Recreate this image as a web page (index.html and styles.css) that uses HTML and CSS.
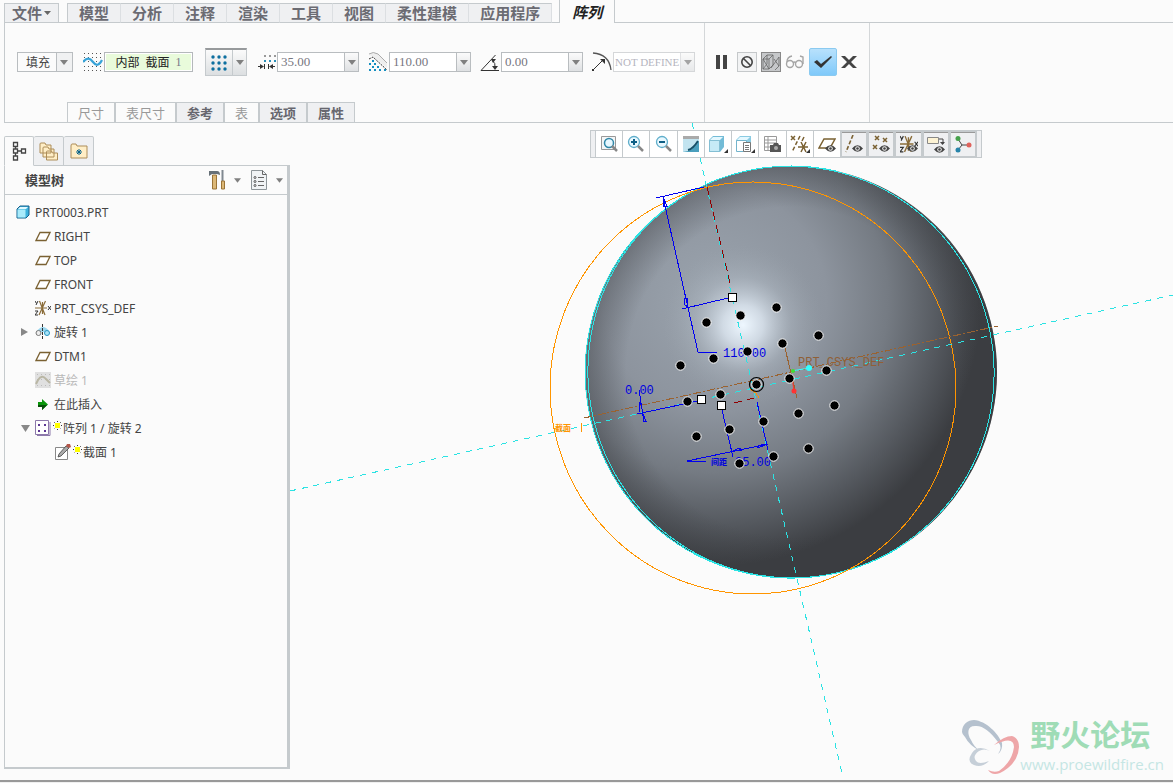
FILE: index.html
```html
<!DOCTYPE html>
<html lang="zh-CN">
  <head>
    <meta charset="utf-8" />
    <title>阵列</title>
    <link rel="stylesheet" href="styles.css">
  </head>
  <body>
    <svg width="0" height="0" class="defs" aria-hidden="true">
      <symbol id="plane" viewBox="0 0 16 16"><path d="M5 4.500h10l-4 8H1z" fill="#fff" stroke="#7a6132" stroke-width="1.300" /></symbol>
      <symbol id="caret" viewBox="0 0 8 5"><path d="M0 0h8l-4 5z" fill="#808080" /></symbol>
      <symbol id="eye" viewBox="0 0 11 7"><path d="M0 3.500Q5.500-3 11 3.500Q5.500 10 0 3.500" fill="#444" /><circle cx="5.500" cy="3.500" r="2.300" fill="#eee" /><circle cx="5.500" cy="3.500" r="1.300" fill="#444" /></symbol>
      <symbol id="star" viewBox="0 0 9 9"><path d="M4.500 0v9M0 4.500h9M1 1l7 7M8 1l-7 7" stroke="#333" stroke-dasharray="1 1" /><path d="M2 2h5v5h-5z" fill="#ff0" /></symbol>
      <symbol id="csys" viewBox="0 0 16 16"><path d="M0 8h12M4.500 1l5.500 14M10.500 1L4 15M7.500 2v12" stroke="#8a6c38" stroke-width="1.200" fill="none" /><path d="M0 1l1.500 2.500M3 1L1 5M0 11h3l-3 4h3M13 6l3 4M16 6l-3 4" stroke="#333" fill="none" /></symbol>
    </svg>

    <header class="ribbon">
      <nav class="tabs">
        <button class="tab file">文件<svg width="7" height="4" viewBox="0 0 7 4"><path d="M0 0h7L3.500 4z" fill="#666" /></svg></button>
        <div class="tab-group">
          <button class="tab">模型</button>
          <button class="tab">分析</button>
          <button class="tab">注释</button>
          <button class="tab">渲染</button>
          <button class="tab">工具</button>
          <button class="tab">视图</button>
          <button class="tab">柔性建模</button>
          <button class="tab">应用程序</button>
        </div>
        <button class="tab current">阵列</button>
      </nav>

      <div class="dashboard">
        <div class="options">
          <div class="fields">
            <select class="type" aria-label="阵列类型"><option>填充</option></select>

            <div class="field">
              <svg width="20" height="20"><path d="M1 1.500h19M1 5.500h19M1 9.500h19M1 14.500h19M1 18.500h19" stroke="#555" stroke-dasharray="1 3" /><path d="M0 10C4 5 7 6 10 10S16 14 19 8" fill="none" stroke="#38a3d8" stroke-width="2.200" /></svg>
              <button class="collector"><span>内部</span><span>截面</span><span class="count">1</span></button>
            </div>

            <div class="grid-type">
              <button class="dots" aria-label="栅格">
                <svg width="18" height="18" fill="#0d6f9f"><circle cx="3" cy="3" r="1.700" /><circle cx="9" cy="3" r="1.700" /><circle cx="15" cy="3" r="1.700" /><circle cx="3" cy="9" r="1.700" /><circle cx="9" cy="9" r="1.700" /><circle cx="15" cy="9" r="1.700" /><circle cx="3" cy="15" r="1.700" /><circle cx="9" cy="15" r="1.700" /><circle cx="15" cy="15" r="1.700" /></svg>
              </button>
              <button class="drop" aria-label="栅格列表"><svg width="8" height="5"><use href="#caret" /></svg></button>
            </div>

            <div class="field">
              <svg width="18" height="20"><path d="M6 4h12" stroke="#999" stroke-width="2" stroke-dasharray="2 3" /><path d="M6 9h12" stroke="#2b8fb8" stroke-width="2" stroke-dasharray="2 3" /><path d="M0 14.500h5M12 14.500h5M6.500 12v5M10.500 12v5" stroke="#333" /><path d="M2 12l4 2.500-4 2.500zM15 12l-4 2.500 4 2.500z" fill="#333" /></svg>
              <div class="combo"><input value="35.00" aria-label="间距" /><button aria-label="间距列表"><svg width="8" height="5"><use href="#caret" /></svg></button></div>
            </div>

            <div class="field">
              <svg width="20" height="20"><path d="M1 3Q5-1 10 2L19 11v5L6 5z" fill="#eee" /><path d="M1 2Q5-1 10 2L19 11" fill="none" stroke="#aaa" /><path d="M1 7l4-2 14 13" fill="none" stroke="#333" stroke-dasharray="2 1" /><path d="M4 9h4M1 12h10M4 15h10M1 18h18" stroke="#168fc0" stroke-width="2" stroke-dasharray="2 3" /></svg>
              <div class="combo"><input value="110.00" aria-label="边界" /><button aria-label="边界列表"><svg width="8" height="5"><use href="#caret" /></svg></button></div>
            </div>

            <div class="field">
              <svg width="20" height="20"><path d="M15.500 3L1 18.500h18M12 8q4 3 3 8" fill="none" stroke="#333" /><path d="M11 7h5l-3 4zM12 14h6l-3 4z" fill="#333" /></svg>
              <div class="combo"><input value="0.00" aria-label="角度" /><button aria-label="角度列表"><svg width="8" height="5"><use href="#caret" /></svg></button></div>
            </div>

            <div class="field">
              <svg width="20" height="20"><path d="M1 1Q17 2 19 18" fill="none" stroke="#555" stroke-width="1.300" /><path d="M1 18L11 8" stroke="#333" /><path d="M8 7h5v5zM0 17h2v2H0z" fill="#333" /></svg>
              <div class="combo off"><input value="NOT DEFINE" aria-label="半径" disabled /><button aria-label="半径列表" disabled><svg width="8" height="5"><use href="#caret" /></svg></button></div>
            </div>
          </div>

          <div class="slides">
            <button disabled>尺寸</button>
            <button disabled>表尺寸</button>
            <button>参考</button>
            <button disabled>表</button>
            <button>选项</button>
            <button>属性</button>
          </div>
        </div>

        <div class="controls">
          <button class="pause" aria-label="暂停"><svg width="14" height="14"><path d="M1 0h4v14H1zM8 0h4v14H8z" fill="#444" /></svg></button>
          <button class="boxed" aria-label="无预览"><svg width="14" height="14"><circle cx="7" cy="7" r="5.200" fill="none" stroke="#444" stroke-width="1.600" /><path d="M3.500 3.500l7 7" stroke="#444" stroke-width="1.600" /></svg></button>
          <button class="boxed pressed" aria-label="连接"><svg width="18" height="18" fill="none" stroke="#666" stroke-width=".8"><path d="M1 6l4-4h6l-4 4zM1 6v10h6V6M7 16l4-4V2M5 2v9l-4 5M9 15l8-11v9l-4 4M12 6l5 7M1 6l6 10" /></svg></button>
          <button aria-label="预览"><svg width="20" height="14" fill="none" stroke="#a5a5a5" stroke-width="1.400"><circle cx="5" cy="9" r="3.500" /><circle cx="14" cy="9" r="3.500" /><path d="M8 8q1.500-2 3 0M2 7q0-5 5-6M18 9V2l-3-1" /></svg></button>
          <button class="ok" aria-label="确定"><svg width="20" height="14"><path d="M1 7l3-2 4 4L18 1l1 1L8 13z" fill="#333" /></svg></button>
          <button aria-label="取消"><svg width="16" height="14"><path d="M0 1h4l4 4 4-4h4l-6 6 6 6h-4L8 9l-4 4H0l6-6z" fill="#444" /></svg></button>
        </div>
      </div>
    </header>

    <main class="workspace">
      <aside class="navigator">
        <div class="nav-tabs">
          <button class="current" aria-label="模型树"><svg width="15" height="20" fill="none" stroke="#444" stroke-width="1.300"><path d="M1.500 1.500h4v4h-4zM1.500 8h4v4h-4zM1.500 15h4v4h-4zM9.500 8h4v4h-4zM3.500 5.500V8M3.500 12v3M5.500 10h4" /></svg></button>
          <button aria-label="文件夹"><svg width="20" height="20" fill="#ffeec6" stroke="#ad8d58"><path d="M1 3q0-1 1-1h4l1 2h5v8H1zM4 7q0-1 1-1h4l1 2h5v8H4zM7.500 11q0-1 1-1h4l1 2h5v7h-11z" /></svg></button>
          <button aria-label="收藏夹"><svg width="18" height="16"><path d="M1 3q0-2 1-2h4l1 2h10v12H1z" fill="#ffeec6" stroke="#ad8d58" /><path d="M9 6v6M6 9h6M7 7l4 4M11 7l-4 4" stroke="#07628a" /></svg></button>
        </div>

        <section class="panel">
          <div class="panel-head">
            <h2>模型树</h2>
            <button aria-label="设置"><svg width="18" height="22"><path d="M1 2h8q3 0 3 4L9 5H4L1 7z" fill="#667078" /><path d="M4.500 6h4v14h-4z" fill="#dcb878" stroke="#9a7438" /><path d="M14.500 1v11" stroke="#808890" stroke-width="2" /><path d="M13.500 12h3v8h-3z" fill="#dcb878" stroke="#9a7438" /></svg><svg width="7" height="5"><use href="#caret" /></svg></button>
            <button aria-label="显示"><svg width="18" height="20"><path d="M1.500.5h11l4 4v15h-15z" fill="#f0f3f5" stroke="#8d9599" /><path d="M12.500.5v4h4M8 7.500h6M8 11.500h6M8 15.500h6" fill="none" stroke="#666" /><g fill="none" stroke="#555"><circle cx="5" cy="7.500" r="1" /><circle cx="5" cy="11.500" r="1" /><circle cx="5" cy="15.500" r="1" /></g></svg><svg width="7" height="5"><use href="#caret" /></svg></button>
          </div>

          <ul class="tree">
            <li class="root"><svg width="14" height="14"><path d="M1 4l3-3h9v9l-3 3H1z" fill="#3cb1dc" stroke="#17608c" /><path d="M1.500 4.500h8v8h-8z" fill="#a9ebfb" /><path d="M2 4l2-2h8l-2 2z" fill="#e0f9ff" /></svg><span>PRT0003.PRT</span></li>
            <li><svg width="16" height="16"><use href="#plane" /></svg><span>RIGHT</span></li>
            <li><svg width="16" height="16"><use href="#plane" /></svg><span>TOP</span></li>
            <li><svg width="16" height="16"><use href="#plane" /></svg><span>FRONT</span></li>
            <li><svg width="16" height="16"><use href="#csys" /></svg><span>PRT_CSYS_DEF</span></li>
            <li class="branch"><svg width="8" height="10"><path d="M0 1v8l7-4z" fill="#888" /></svg><svg width="16" height="16"><path d="M2 7q6-8 12 0l-5 1H6z" fill="#9bd6ee" /><circle cx="3.500" cy="9" r="2.500" fill="#eee" stroke="#777" /><circle cx="12" cy="9" r="2.500" fill="#a8e4fa" stroke="#2794bf" /><path d="M7.500 0v16" stroke="#333" stroke-dasharray="3 1" /></svg><span>旋转 1</span></li>
            <li><svg width="16" height="16"><use href="#plane" /></svg><span>DTM1</span></li>
            <li class="hidden"><svg width="16" height="16"><path d="M0 0h16v16H0z" fill="#e0e0e0" /><path d="M2 2.500h13M2 7.500h13M2 13.500h13" stroke="#bbb" stroke-dasharray="1 3" /><path d="M1 12l2-4q4-6 8-1l4 4" fill="none" stroke="#b9b6a4" stroke-width="2" /></svg><span>草绘 1</span></li>
            <li><svg width="16" height="16"><path d="M3 6h4V3l6 5.500L7 14v-3H3z" fill="#0a960a" /><path d="M3 9h9l-5 5v-3H3z" fill="#064f08" /></svg><span>在此插入</span></li>
            <li class="branch"><svg width="10" height="8"><path d="M0 1h9L4.500 8z" fill="#888" /></svg><svg width="16" height="16"><path d="M.5.500h13v14H.5z" fill="#fff" stroke="#8c78aa" /><path d="M2 15.500h13V2" fill="none" stroke="#8c78aa" /><path d="M3 4h2v2H3zM9 4h2v2H9zM3 10h2v2H3zM9 10h2v2H9z" fill="#5c3693" /></svg><svg class="new" width="9" height="9"><use href="#star" /></svg><span>阵列 1 / 旋转 2</span></li>
            <li class="leaf"><svg width="16" height="16"><path d="M.5 3.500h12v12H.5z" fill="#fff" stroke="#888" /><path d="M3 13l1-3 7-8 3 2-8 8z" fill="#aaa" stroke="#444" stroke-width=".8" /><path d="M12 0h3l1 3-2 1-3-2z" fill="#b4564a" /></svg><svg class="new" width="9" height="9"><use href="#star" /></svg><span>截面 1</span></li>
          </ul>
        </section>
      </aside>

      <section class="viewport">
        <svg class="scene" viewBox="290 123 883 657">
          <defs>
            <radialGradient id="shade" gradientUnits="userSpaceOnUse" cx="715" cy="300" r="266">
              <stop offset="0" stop-color="#9ba4ae" />
              <stop offset=".42" stop-color="#8d949e" />
              <stop offset=".65" stop-color="#757b83" />
              <stop offset=".85" stop-color="#54585e" />
              <stop offset="1" stop-color="#3b3d41" />
            </radialGradient>
            <radialGradient id="rim" gradientUnits="userSpaceOnUse" cx="791" cy="372" r="206">
              <stop offset=".8" stop-color="#3b3d41" stop-opacity="0" />
              <stop offset="1" stop-color="#3b3d41" stop-opacity=".4" />
            </radialGradient>
            <radialGradient id="shine" gradientUnits="userSpaceOnUse" cx="743" cy="325" r="80">
              <stop offset="0" stop-color="#eef7ff" />
              <stop offset=".25" stop-color="#e4eef8" stop-opacity=".75" />
              <stop offset=".6" stop-color="#c4ced8" stop-opacity=".25" />
              <stop offset="1" stop-color="#a0a8b0" stop-opacity="0" />
            </radialGradient>
          </defs>

          <circle cx="791" cy="372" r="206" fill="url(#shade)" />
          <circle cx="791" cy="372" r="206" fill="url(#rim)" />
          <circle cx="743" cy="325" r="80" fill="url(#shine)" />

          <g class="lines">
            <path class="cyan" d="M836 171A206 206 0 1 0 900 547" />
            <ellipse class="cyan" cx="791" cy="372" rx="203" ry="206" transform="rotate(-12 791 372)" />
            <ellipse class="orange" cx="753" cy="388" rx="203" ry="206" />
            <path class="cyan axis" d="M290 491L1173 295M692 123L843 778" />
            <path class="brown" stroke-dasharray="8 2 2 2" d="M584 418L998 326" />
            <path class="brown" d="M785 348l12 50" />
            <path class="maroon" stroke-dasharray="8 5" d="M707 187l24 100M734 403l24-6" />
            <path class="orange" d="M581 423v9M750 389l6 4 3 5" />

            <path class="blue" d="M656 198l48-11M663 197l35 155h19M682 309l46-11" />
            <path class="blue" d="M663 197v9h4zM684 298h3l1 9-3-2z" />
            <path class="blue" d="M639 390l5 32M637 414l61-13M639 412l1-10 3 10M643 414l3 7h-3z" />
            <path class="blue" d="M722 410l11 47M757 402l11 48M706 461h-19l81-17" />
            <path class="blue" d="M733 451l6-3 3 2zM767 444l-6 1-4 2 1 1z" />
          </g>

          <text class="dim" x="723" y="357">110.00</text>
          <text class="dim" x="625" y="394">0.00</text>
          <text class="dim" x="735" y="466">35.00</text>
          <text class="tag dim-tag" x="711" y="465">间距</text>
          <text class="tag section-tag" x="555" y="431">截面</text>
          <text class="csys-name" x="798" y="366">PRT_CSYS_DEF</text>

          <path d="M792 371l17-3" stroke="#3ff" />
          <path d="M792 377l2 14" stroke="#f33" />
          <circle cx="793" cy="371" r="2" fill="#4d3" />
          <circle cx="809" cy="368" r="3" fill="#3ff" />
          <circle cx="794" cy="391" r="2.500" fill="#f33" />

          <!-- pattern members -->
          <g class="members" transform="translate(.5 .5)">
            <circle cx="740" cy="315" r="4.700" /><circle cx="776" cy="307" r="4.700" />
            <circle cx="706" cy="322" r="4.700" /><circle cx="818" cy="335" r="4.700" />
            <circle cx="782" cy="343" r="4.700" /><circle cx="747" cy="351" r="4.700" />
            <circle cx="713" cy="358" r="4.700" /><circle cx="680" cy="365" r="4.700" />
            <circle cx="826" cy="370" r="4.700" /><circle cx="789" cy="378" r="4.700" />
            <circle cx="756" cy="384" r="4.700" /><circle cx="720" cy="394" r="4.700" />
            <circle cx="687" cy="401" r="4.700" /><circle cx="834" cy="405" r="4.700" />
            <circle cx="798" cy="413" r="4.700" /><circle cx="763" cy="421" r="4.700" />
            <circle cx="729" cy="429" r="4.700" /><circle cx="696" cy="436" r="4.700" />
            <circle cx="808" cy="448" r="4.700" /><circle cx="773" cy="456" r="4.700" />
            <circle cx="739" cy="463" r="4.700" />
          </g>
          <circle cx="756.5" cy="384.5" r="7" fill="none" stroke="#000" stroke-width="1.200" />

          <!-- drag handles -->
          <g class="handles">
            <rect x="728.5" y="293.5" width="8" height="8" />
            <rect x="697.5" y="395.5" width="8" height="8" />
            <rect x="717.5" y="401.5" width="8" height="8" />
          </g>
        </svg>

        <div class="view-bar">
          <button aria-label="重新调整"><svg width="18" height="18"><path d="M1.500 1.500h14v13h-14z" fill="#f4f6f7" stroke="#999" /><circle cx="9" cy="8" r="4.500" fill="#e8f8ff" stroke="#3188a8" stroke-width="1.500" /><path d="M12 11l5 5" stroke="#888" stroke-width="2.500" /></svg></button>
          <button aria-label="放大"><svg width="18" height="18"><circle cx="7" cy="7" r="5.500" fill="#e8f8ff" stroke="#5faecb" stroke-width="1.300" /><path d="M4 7h6M7 4v6" stroke="#0d5f86" stroke-width="2" /><path d="M11 11l5 5" stroke="#888" stroke-width="2.500" /></svg></button>
          <button aria-label="缩小"><svg width="18" height="18"><circle cx="7" cy="7" r="5.500" fill="#e8f8ff" stroke="#5faecb" stroke-width="1.300" /><path d="M4 7h6" stroke="#0d5f86" stroke-width="2" /><path d="M11 11l5 5" stroke="#888" stroke-width="2.500" /></svg></button>
          <button aria-label="重画"><svg width="18" height="18"><path d="M1 1h16v16H1z" fill="#c2e4f0" /><path d="M1 1h16v3H1z" fill="#aaa" /><path d="M1 17q11-1 16-11v11z" fill="#4a9fbd" /><path d="M6 15q5-1 10-9" fill="none" stroke="#164f68" stroke-width="2" /></svg></button>
          <button aria-label="显示样式"><svg width="20" height="18"><path d="M1 5l4-4h11v11l-4 5H1z" fill="#73bcd7" /><path d="M1.500 5.500h10v11h-10z" fill="#c6eaf6" stroke="#84bfd4" /><path d="M2 5l3-3h10l-3 3z" fill="#e4f8ff" /><path d="M20 14v4h-4z" fill="#333" /></svg></button>
          <button aria-label="已保存方向"><svg width="20" height="18"><path d="M1 5l4-4h11v7H1z" fill="#8acbe2" /><path d="M2 5l3-3h10l-3 3z" fill="#e4f8ff" /><path d="M1.500 5.500h10v11h-10z" fill="#fff" stroke="#73b4cc" /><path d="M8.500 7.500h7v9h-7z" fill="#fff" stroke="#777" /><path d="M10 10.500h4M10 12.500h4M10 14.500h4" stroke="#777" /><path d="M20 14v4h-4z" fill="#333" /></svg></button>
          <button aria-label="视图管理器"><svg width="18" height="18"><path d="M1.500 1.500h12v14h-12zM1 5h12M1 8h12M1 12h12M5 1v14" fill="#fff" stroke="#999" /><path d="M7 10h3l1-2h4l1 2h2v7H7z" fill="#555" /><circle cx="13" cy="13" r="2" fill="#aaa" /></svg></button>
          <button aria-label="基准显示"><svg width="20" height="18" fill="none" stroke="#7a6132" stroke-width="1.500"><path d="M1 1l4 4M5 1L1 5" /><path d="M10 1L2 17" stroke-dasharray="4 2" /><path d="M8 12h10M11 7l5 10M16 7l-5 10M14 2l-2 4" /><path d="M20 14v4h-4z" fill="#333" stroke="none" /></svg></button>
          <button aria-label="平面显示"><svg width="18" height="18"><path d="M6 4h11l-5 9H1z" fill="none" stroke="#7a6132" stroke-width="1.500" /><use href="#eye" x="7" y="10" width="11" height="7" /></svg></button>
          <button class="on" aria-label="轴显示"><svg width="18" height="18"><path d="M8 0L1 17" stroke="#7a6132" stroke-width="1.600" stroke-dasharray="4 2" /><use href="#eye" x="7" y="10" width="11" height="7" /></svg></button>
          <button class="on" aria-label="点显示"><svg width="18" height="18"><path d="M3 1l4 4M7 1L3 5M11 3l4 4M15 3l-4 4M1 10l4 4M5 10l-4 4" stroke="#7a6132" stroke-width="1.500" /><use href="#eye" x="7" y="10" width="11" height="7" /></svg></button>
          <button class="on" aria-label="坐标系显示"><svg width="18" height="18"><use href="#csys" width="18" height="18" /><use href="#eye" x="7" y="10" width="11" height="7" /></svg></button>
          <button class="on" aria-label="注释显示"><svg width="18" height="18"><path d="M.5 2.500h11v6H.5z" fill="#fdf3d4" stroke="#888" /><path d="M12 4h4v5" fill="none" stroke="#444" /><path d="M13 7h5l-2.500 3z" fill="#444" /><use href="#eye" x="7" y="11" width="11" height="7" /></svg></button>
          <button class="on" aria-label="旋转中心"><svg width="18" height="18"><path d="M4 4l4 6-4 5M8 10h6" fill="none" stroke="#444" /><circle cx="4" cy="3.500" r="2.500" fill="#46a14c" /><circle cx="4" cy="15" r="2.500" fill="#2784aa" /><circle cx="15" cy="10" r="2.500" fill="#e0625c" /></svg></button>
        </div>

        <div class="watermark">
          <svg width="58" height="56"><path d="M0 12C0 4 6 0 12 0C24 1 36 13 40 23Q41 30 36 34Q41 27 36 22C28 11 20 5 13 6C5 6 5 14 9 20Q12 27 18 31Q7 25 3 17Q0 14 0 12z" fill="#b5c1ce" /><path d="M28 31Q16 24 10 33Q4 42 12 45Q20 48 27 41Q17 45 14 41Q10 36 17 31Q22 28 28 31z" fill="#c6cfd8" /><path d="M32 25Q42 16 50 16Q57 18 57 27Q56 44 38 53Q30 56 26 50Q32 53 37 51Q50 42 52 27Q52 15 32 25z" fill="#eea6a8" /></svg>
          <div>
            <strong>野火论坛</strong>
            <a href="#">www.proewildfire.cn</a>
          </div>
        </div>
      </section>
    </main>
    <footer class="status"></footer>
  </body>
</html>
```

FILE: styles.css
```css
* {
  box-sizing: border-box;
}
body {
  margin: 0;
  height: 100vh;
  display: flex;
  flex-direction: column;
  background-color: #fbfbfb;
  color: #444;
  font: 12px "Noto Sans", "Noto Sans CJK SC", sans-serif;
  overflow: hidden;
}
button,
input,
select {
  margin: 0;
  padding: 0;
  border: 0;
  border-radius: 0;
  background: none;
  color: inherit;
  font: inherit;
}
button {
  display: flex;
  align-items: center;
  justify-content: center;
}
svg {
  flex: none;
}
.defs {
  position: absolute;
}

/* ribbon */
.tabs {
  display: flex;
  align-items: flex-end;
  height: 23px;
  padding-left: 4px;
  background: linear-gradient(#c5cacd, #c5cacd) 4px 22px / 100% 1px no-repeat;
}
.tab {
  height: 20px;
  padding: 0 11px;
  border: 1px solid #c5cacd;
  border-left-width: 0;
  background-color: #eff0f2;
  color: #6b6b72;
  font-family: "Noto Sans CJK SC", sans-serif;
  font-size: 15px;
  font-weight: bold;
  line-height: 18px;
}
.tab.file {
  gap: 2px;
  padding: 0 7px;
  border-left-width: 1px;
}
.tab-group {
  display: flex;
  margin: 0 7px 0 8px;
  border-left: 1px solid #c5cacd;
}
.tab-group .tab {
  border-right-color: #dcdfe2;
}
.tab.current {
  height: 23px;
  padding: 0 12px;
  border-width: 0 1px;
  background-color: #fbfbfb;
  color: #222;
  font-style: italic;
}
.dashboard {
  display: flex;
  height: 100px;
  margin-left: 4px;
  border-left: 1px solid #c5cacd;
  border-bottom: 1px solid #c5cacd;
}
.options {
  display: flex;
  flex-direction: column;
  justify-content: space-between;
  width: 700px;
  padding-top: 25px;
  border-right: 1px solid #d4d7d9;
}
.fields {
  display: flex;
  align-items: center;
  gap: 9px;
  height: 28px;
  padding-left: 12px;
}
.type {
  width: 56px;
  height: 20px;
  margin-right: 1px;
  padding-left: 8px;
  border: 1px solid #b9bdc0;
  appearance: none;
  background: url("data:image/svg+xml,%3Csvg xmlns='http://www.w3.org/2000/svg' width='16' height='18'%3E%3Cpath d='M0 0h16v18H0z' fill='%23f0f1f2'/%3E%3Cpath d='M.5 0v18' stroke='%23b9bdc0'/%3E%3Cpath d='M4 7h8l-4 5z' fill='%23808080'/%3E%3C/svg%3E") right no-repeat;
}
.field {
  display: flex;
  align-items: center;
  gap: 1px;
}
.collector {
  gap: 6px;
  width: 89px;
  height: 20px;
  border: 1px solid #b4b8bb;
  background-color: #e9fbdb;
  box-shadow: inset 0 0 0 1px #fff;
  color: #222;
}
.count {
  color: #778;
  font-family: "Liberation Serif", serif;
}
.grid-type {
  display: flex;
  height: 28px;
  margin: 0 2px 0 3px;
  border: 1px solid #c5cacd;
  border-top: 2px solid #979a9c;
  background-image: linear-gradient(#fbfbfb, #dcdfe1);
}
.dots {
  width: 26px;
}
.drop {
  width: 14px;
  border-left: 1px solid #c5cacd;
}
.combo {
  display: flex;
  height: 20px;
  border: 1px solid #b9bdc0;
}
.combo input {
  width: 66px;
  padding-left: 3px;
  background-color: #fff;
  color: #77777f;
  font-family: "Liberation Serif", serif;
  font-size: 13px;
}
.combo button {
  width: 14px;
  border-left: 1px solid #b9bdc0;
  background-image: linear-gradient(#fbfbfb, #dfe1e3);
}
.combo.off {
  border-color: #d5d7d9;
}
.combo.off input {
  padding-left: 1px;
  color: #b5b5c0;
  font-size: 11px;
}
.combo.off button {
  border-color: #d5d7d9;
  opacity: 0.7;
}
.slides {
  display: flex;
  padding-left: 62px;
}
.slides button {
  height: 20px;
  padding: 0 10px;
  border: 1px solid #c5cacd;
  border-bottom-width: 0;
  background-color: #eff0f2;
  color: #66666e;
  font-family: "Noto Sans CJK SC", sans-serif;
  font-size: 13px;
  font-weight: bold;
  line-height: 18px;
}
.slides button:disabled {
  background-color: #fbfbfb;
  color: #999;
  font-weight: normal;
}
.controls {
  display: flex;
  align-items: center;
  gap: 4px;
  width: 165px;
  padding: 0 8px 22px 10px;
  border-right: 1px solid #d4d7d9;
}
.pause {
  margin-right: 4px;
}
.boxed {
  width: 20px;
  height: 20px;
  border: 1px solid #c5c8ca;
  background-color: #f2f3f4;
}
.pressed {
  border-color: #888;
  background-color: #c6c8ca;
}
.ok {
  width: 28px;
  height: 28px;
  border: 1px solid #8bcaf0;
  border-radius: 2px;
  background-image: linear-gradient(#b8e1fc, #7fc9fa);
}

/* navigator */
.workspace {
  display: flex;
  flex: 1;
  min-height: 0;
}
.navigator {
  display: flex;
  flex-direction: column;
  width: 286px;
  margin: 13px 0 11px 4px;
}
.nav-tabs {
  display: flex;
}
.nav-tabs button {
  width: 30px;
  height: 30px;
  margin-bottom: -1px;
  border: 1px solid #c5cacd;
  border-left-width: 0;
  border-radius: 2px 2px 0 0;
  background-color: #eff0f2;
}
.nav-tabs .current {
  z-index: 1;
  border-left-width: 1px;
  border-bottom-color: #fbfbfb;
  background-color: #fbfbfb;
}
.panel {
  flex: 1;
  border: 1px solid #c5cacd;
  border-width: 1px 3px 2px 1px;
}
.panel-head {
  display: flex;
  align-items: center;
  gap: 9px;
  height: 29px;
  padding: 0 4px 0 20px;
  border-bottom: 1px solid #c5cacd;
}
.panel-head h2 {
  flex: 1;
  margin: 0;
  font-size: 13px;
  line-height: 18px;
}
.panel-head button {
  gap: 8px;
}
.tree {
  margin: 0;
  padding: 5px 0;
  list-style: none;
}
.tree li {
  display: flex;
  align-items: center;
  gap: 3px;
  height: 24px;
  padding-left: 30px;
}
.tree .root {
  gap: 5px;
  padding-left: 11px;
}
.tree .branch {
  padding-left: 16px;
}
.tree .branch svg:first-child {
  width: 11px;
}
.tree .leaf {
  padding-left: 50px;
}
.tree .new {
  align-self: flex-start;
  margin: 5px -2px 0 -1px;
}
.tree .hidden {
  color: #b8b8b8;
}

/* graphics window */
.viewport {
  position: relative;
  flex: 1;
  min-width: 0;
}
.scene {
  display: block;
  width: 100%;
  height: 100%;
}
.lines {
  fill: none;
  shape-rendering: crispEdges;
}
.cyan {
  stroke: #2be3e3;
}
.axis {
  stroke-dasharray: 6 6;
}
.orange {
  stroke: #ff9500;
}
.brown {
  stroke: #9a6230;
}
.maroon {
  stroke: #900000;
}
.blue {
  stroke: #0000f0;
}
.dim,
.csys-name {
  fill: #0000e0;
  font: 12px "Liberation Mono", monospace;
}
.csys-name {
  fill: #8f6038;
}
.tag {
  font: bold 8px "Noto Sans CJK SC", sans-serif;
}
.dim-tag {
  fill: #0000e0;
}
.section-tag {
  fill: #ff9500;
}
.members circle {
  stroke: #fff;
}
.handles rect {
  fill: #fff;
  stroke: #000;
}
.view-bar {
  position: absolute;
  top: 7px;
  left: 300px;
  display: flex;
  width: 392px;
  height: 28px;
  padding: 0 4px;
  border: 1px solid #c5cacd;
  background-color: #eff0f2;
}
.view-bar button {
  flex: 1;
  border-left: 1px solid #c5cacd;
  background-color: #fff;
}
.view-bar button:last-child {
  border-right: 1px solid #c5cacd;
}
.view-bar .on {
  background-color: #eff0f2;
  box-shadow: inset 0 0 0 1px #c5cacd, inset 0 2px #999;
}
.watermark {
  position: absolute;
  right: 9px;
  bottom: 4px;
  display: flex;
  align-items: center;
}
.watermark div {
  display: flex;
  flex-direction: column;
}
.watermark strong {
  padding-left: 10px;
  color: #9fdcb6;
  font: bold 30px/32px "Liberation Sans", "Noto Sans CJK SC", sans-serif;
}
.watermark a {
  color: #c5e6e4;
  font: 15px/24px "Open Sans", sans-serif;
  text-decoration: none;
}
.status {
  height: 3px;
  border-top: 2px solid #999;
  background-color: #f0f0f0;
}
```
